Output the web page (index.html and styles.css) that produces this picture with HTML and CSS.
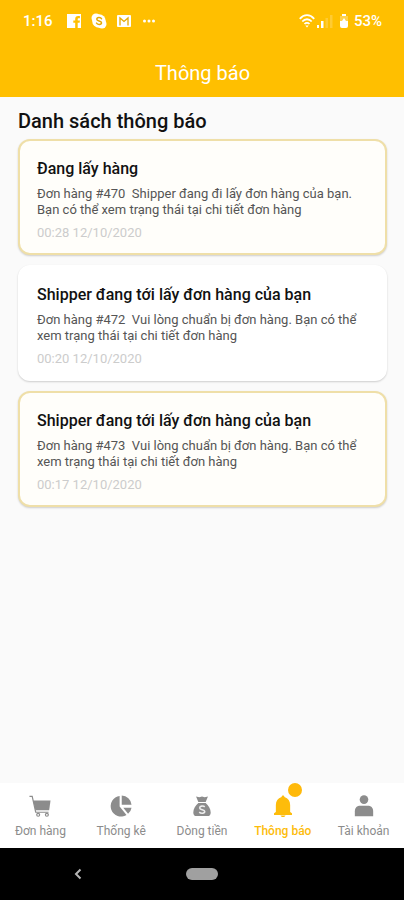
FILE: index.html
```html
<!DOCTYPE html>
<html lang="vi">
<head>
<meta charset="utf-8">
<meta name="viewport" content="width=device-width, initial-scale=1">
<title>Thông báo</title>
<link rel="stylesheet" href="styles.css">
</head>
<body>
<header class="top">
  <div class="status">
    <span class="clock">1:16</span>
    <svg class="app-icon" viewBox="0 0 16 16" aria-hidden="true"><path fill="#fff" fill-rule="evenodd" d="M1 1h14v14h-3.300V9.700h1.900l.3-2.200h-2.200V6.200c0-.7.300-1 1-1h1.200V3.100h-1.800C10.200 3.100 9.200 4.300 9.200 6v1.500H7.300v2.200h1.900V15H1z"/></svg>
    <svg class="app-icon" viewBox="0 0 16 16" aria-hidden="true"><circle cx="5" cy="5" r="4.500" fill="#fff"/><circle cx="11" cy="11" r="4.500" fill="#fff"/><circle cx="8" cy="8" r="6.800" fill="#fff"/><path d="M10.500 5.700C9.800 4.200 5.800 4 5.800 6.200c0 2.300 4.700 1.200 4.700 3.600 0 2.200-4.300 2.100-5 .3" fill="none" stroke="#e5a900" stroke-width="1.500" stroke-linecap="round"/></svg>
    <svg class="app-icon" viewBox="0 0 16 16" aria-hidden="true"><rect x="1" y="2" width="14" height="12" rx="1" fill="#fff"/><path d="M4 12.500V5l4 3.500L12 5v7.500" fill="none" stroke="#e5a900" stroke-width="1.300"/></svg>
    <svg class="app-icon" viewBox="0 0 16 16" aria-hidden="true"><g fill="#fff"><circle cx="3.500" cy="8" r="1.500"/><circle cx="8" cy="8" r="1.500"/><circle cx="12.500" cy="8" r="1.500"/></g></svg>
    <span class="spacer"></span>
    <svg class="wifi" viewBox="0 0 16 14" aria-hidden="true"><g fill="none" stroke="#fff" stroke-width="1.800"><path d="M.8 4.800C5-.1 11-.1 15.200 4.800"/><path d="M3.300 7.500c2.700-3 6.700-3 9.400 0"/><path d="M5.500 10c1.500-1.600 3.500-1.600 5 0"/></g><path fill="#fff" d="M6.300 11.500h3.400L8 13.500z"/></svg>
    <svg class="signal" viewBox="0 0 16 14" aria-hidden="true"><g fill="#fff"><path d="M0 11h2v3H0zM4 7h2.500v7H4z"/><path opacity=".2" d="M8.500 4H11v10H8.500zM13 1h2.500v13H13z"/></g></svg>
    <svg class="battery" viewBox="0 0 10 14" aria-hidden="true"><path fill="#fff" opacity=".3" d="M3 0h4v2h2v6H1V2h2z"/><path fill="#fff" d="M3 0h4v2H3zM1 7h2l2-3 2 3h2v5a2 2 0 0 1-2 2H3a2 2 0 0 1-2-2z"/></svg>
    <span class="percent">53%</span>
  </div>
  <h1 class="title">Thông báo</h1>
</header>
<main class="content">
  <h2 class="heading">Danh sách thông báo</h2>
  <article class="card unread">
    <h3 class="card-title">Đang lấy hàng</h3>
    <p class="card-text">Đơn hàng #470&nbsp; Shipper đang đi lấy đơn hàng của bạn. Bạn có thể xem trạng thái tại chi tiết đơn hàng</p>
    <time class="card-time">00:28 12/10/2020</time>
  </article>
  <article class="card">
    <h3 class="card-title">Shipper đang tới lấy đơn hàng của bạn</h3>
    <p class="card-text">Đơn hàng #472&nbsp; Vui lòng chuẩn bị đơn hàng. Bạn có thể xem trạng thái tại chi tiết đơn hàng</p>
    <time class="card-time">00:20 12/10/2020</time>
  </article>
  <article class="card unread">
    <h3 class="card-title">Shipper đang tới lấy đơn hàng của bạn</h3>
    <p class="card-text">Đơn hàng #473&nbsp; Vui lòng chuẩn bị đơn hàng. Bạn có thể xem trạng thái tại chi tiết đơn hàng</p>
    <time class="card-time">00:17 12/10/2020</time>
  </article>
</main>
<nav class="tabs">
  <a class="tab" href="#orders"><svg class="tab-icon" viewBox="0 0 24 24" aria-hidden="true"><path fill="currentColor" d="M4.500 6H23.500l-1.500 10.500H7z"/><path fill="none" stroke="currentColor" stroke-width="1.300" d="M.5 1.500h3L7.300 18.800h14"/><g fill="none" stroke="currentColor" stroke-width="1.300"><circle cx="10" cy="21.600" r="1.600"/><circle cx="19.500" cy="21.600" r="1.600"/></g></svg>Đơn hàng</a>
  <a class="tab" href="#stats"><svg class="tab-icon" viewBox="0 0 24 24" aria-hidden="true"><path fill="currentColor" d="M10.500 1v11.500l7.500 9.300A11.300 11.300 0 1 1 10.500 1zM12.800.5A11 11 0 0 1 23.500 10.500H12.800zM14.500 14h9a10 10 0 0 1-3.800 6.500z"/></svg>Thống kê</a>
  <a class="tab" href="#cash"><svg class="tab-icon" viewBox="0 0 24 24" aria-hidden="true"><path fill="currentColor" d="M5.500 1.500l3.500 1 3-1 3 1 3.500-1L16 7.500H8zM8 8.800h8c3 2.500 5.500 6.200 5.500 10.200 0 2.500-1.200 4-3.500 4H6c-2.300 0-3.500-1.500-3.500-4 0-4 2.500-7.700 5.500-10.200z"/><path d="M15 13c-1.500-1.500-5.500-1.200-5.500 1.100 0 2.500 5.500 1.300 5.500 4 0 2.200-4.300 2.400-6 .6" fill="none" stroke="#eee" stroke-width="1.700"/></svg>Dòng tiền</a>
  <a class="tab active" href="#notifications" aria-current="page"><span class="bell"><svg class="tab-icon" viewBox="0 0 24 24" aria-hidden="true"><path fill="currentColor" d="M12 .5c.9 0 1.500.7 1.600 1.800C17.700 3.600 19.800 7 19.800 11v7.500l2 1.500v1.800H2.200V20l2-1.500V11c0-4 2.100-7.400 6.200-8.700C10.500 1.200 11.100.5 12 .5zM9.300 22.300h5.400c-.5 1.100-1.500 1.700-2.700 1.700s-2.200-.6-2.700-1.700z"/></svg><span class="dot"></span></span>Thông báo</a>
  <a class="tab" href="#account"><svg class="tab-icon" viewBox="0 0 24 24" aria-hidden="true"><g fill="currentColor"><circle cx="12" cy="5" r="4.700"/><path d="M2 23.200v-5.500c0-4 2.500-6 6-6h8c3.500 0 6 2 6 6v5.500z"/></g></svg>Tài khoản</a>
</nav>
<footer class="system">
  <button class="sys-btn" aria-label="Quay lại"><svg class="back" viewBox="0 0 8 12" aria-hidden="true"><path d="M6.500 1.500L2 6l4.500 4.500" fill="none" stroke="#b5b5b5" stroke-width="2"/></svg></button>
  <button class="sys-btn" aria-label="Màn hình chính"><span class="pill"></span></button>
  <span></span>
</footer>
</body>
</html>
```
FILE: styles.css
```css
* { box-sizing: border-box; }

body {
  margin: 0;
  min-height: 100vh;
  display: flex;
  flex-direction: column;
  background: #fafafa;
  color: #111;
  font-family: Roboto, "Liberation Sans", sans-serif;
}

h1, h2, h3, p { margin: 0; }

.top {
  background: #ffbf00;
  color: #fff;
  padding: 11px 22px 12px 23px;
}

.status {
  display: flex;
  align-items: center;
  height: 20px;
  font-size: 15px;
  font-weight: 500;
}

.clock { margin-right: 13px; }
.app-icon { width: 16px; height: 16px; margin-right: 9px; }
.spacer { flex: 1; }
.wifi { width: 16px; height: 14px; margin-right: 2px; }
.signal { width: 16px; height: 14px; margin-right: 6px; }
.battery { width: 10px; height: 14px; margin-right: 5px; }

.title {
  margin-top: 30px;
  font-size: 20px;
  line-height: 24px;
  font-weight: 400;
  text-align: center;
}

.content {
  flex: 1;
  display: flex;
  flex-direction: column;
  gap: 10px;
  padding: 12px 17px 12px 18px;
}

.heading {
  margin-bottom: -4px;
  font-size: 20px;
  line-height: 24px;
  font-weight: 500;
}

.card {
  padding: 18px 16px 12px 17px;
  border: 2px solid #fff;
  border-radius: 12px;
  background: #fff;
  box-shadow: 0 1px 2px rgba(0, 0, 0, 0.18);
}

.unread {
  border-color: #efdfa8;
  background: #fffefa;
}

.card-title {
  font-size: 16px;
  line-height: 20px;
  font-weight: 500;
}

.card-text {
  margin-top: 7px;
  font-size: 13px;
  line-height: 16px;
  color: #555;
}

.card-time {
  display: block;
  margin-top: 7px;
  font-size: 13px;
  line-height: 16px;
  color: #ccc;
}

.tabs {
  display: grid;
  grid-template-columns: repeat(5, 1fr);
  background: #fff;
  padding: 12px 0 9px;
}

.tab {
  display: flex;
  flex-direction: column;
  align-items: center;
  gap: 6px;
  color: #8c8c8c;
  font-size: 12px;
  line-height: 16px;
  text-decoration: none;
  white-space: nowrap;
}

.tab-icon { display: block; width: 22px; height: 22px; }
.active { color: #fdbc0b; font-weight: 500; }
.bell { position: relative; }

.dot {
  position: absolute;
  top: -12px;
  right: -8px;
  width: 14px;
  height: 14px;
  border-radius: 50%;
  background: #ffb90a;
}

.system {
  display: grid;
  grid-template-columns: 1fr 1fr 1fr;
  align-items: center;
  height: 52px;
  padding: 0 16px;
  background: #000;
}

.sys-btn {
  display: flex;
  justify-content: center;
  padding: 0;
  border: 0;
  background: none;
}

.back { width: 8px; height: 12px; }

.pill {
  width: 32px;
  height: 12px;
  border-radius: 6px;
  background: #a0a0a0;
}
```
